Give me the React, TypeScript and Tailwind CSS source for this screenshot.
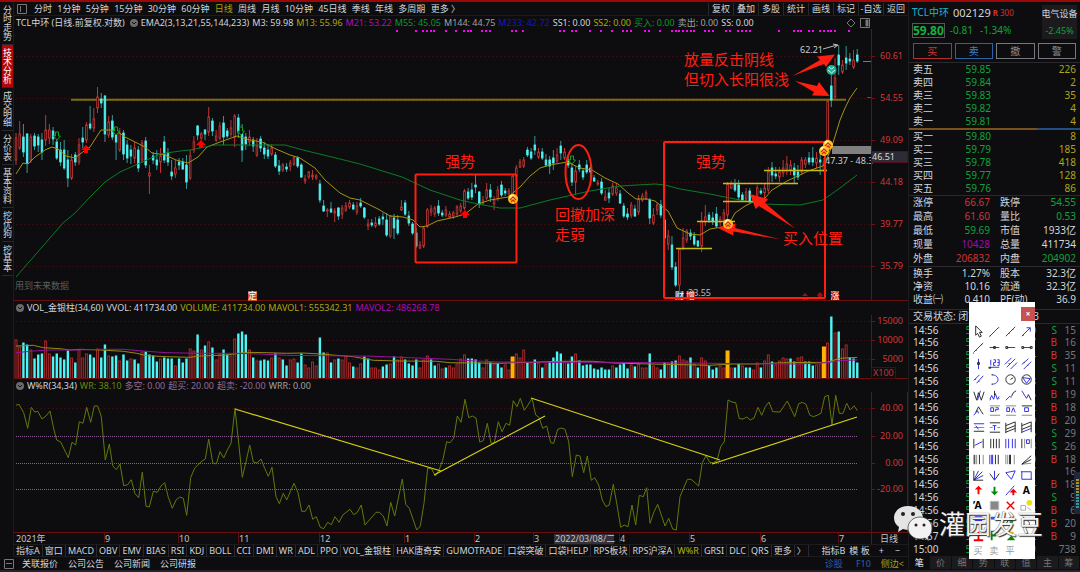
import type { ReactNode } from 'react';
import clsx from 'clsx';

const PITCH = 3.706;
const CYAN = '#4ff5f5';
const RED = '#d23a3a';
const MARK = '#ff1e10';

// colour, high, body top, body bottom, low
const CANDLES = `r133,138,160,165 r121,134,148,150 c124,137,152,157 c133,134,163,173 r134,137,160,163 c133,136,146,150 c134,137,145,152 c133,140,152,160
r115,130,140,146 r124,130,138,144 c127,131,139,145 c132,142,158,160 c142,150,162,166 c140,150,168,170 c150,160,178,187 r154,160,178,180
c152,155,162,166 r138,145,162,165 c127,138,142,148 r122,125,140,143 c106,124,128,130 r108,119,128,132 r87,97,108,113 c93,99,103,108
c95,96,134,142 r116,122,135,138 c115,121,137,140 c130,133,142,160 r128,133,150,152 c130,133,154,160 c140,145,158,163 c145,150,156,164
r142,148,158,163 c146,150,168,172 r140,143,160,163 c137,141,165,168 r165,173,176,194 c152,156,160,164 c150,160,165,170 r148,156,162,173
c136,142,160,163 c148,153,162,166 c160,172,176,180 r160,168,174,178 c158,162,165,170 c158,162,169,170 c155,165,182,189 r150,156,178,180
r136,142,150,153 c125,126,135,140 r132,134,138,140 c129,130,134,140 r107,117,132,136 c118,121,131,136 r130,136,140,142 r122,126,138,140
c116,123,137,145 c128,131,136,138 r120,128,134,137 r114,116,137,147 c114,118,132,138 c124,132,150,162 c133,137,144,150 r130,137,142,146
c137,140,146,152 r138,146,155,157 c136,139,148,152 c142,148,154,159 c144,150,156,159 r144,148,154,156 c152,155,166,168 c160,166,171,175
r163,165,170,172 c163,167,169,172 r160,163,166,171 r156,158,164,166 c156,158,166,168 c163,165,177,178 r175,179,181,184 r171,172,177,179
r170,175,177,180 r174,176,178,180 c180,184,200,203 c200,206,211,212 r208,210,211,217 c202,209,212,213 r208,211,213,222 c207,208,216,220
r205,208,214,219 r202,206,210,212 r200,203,207,209 c202,205,209,210 r202,206,212,215 c198,203,206,208 c207,208,217,219 r219,224,226,230
c219,223,225,227 r217,223,226,228 c216,219,224,226 c213,217,219,225 c213,220,235,237 r215,216,236,238 c214,218,228,239 c215,220,233,235
r200,207,210,211 c200,203,214,216 c211,216,223,226 c222,224,233,235 c228,233,246,248 r241,245,248,249 r226,228,246,248 r208,210,226,228
r205,209,212,216 r206,208,214,217 c200,206,213,216 c210,213,215,217 r206,210,215,217 r211,214,217,218 r211,213,216,219 r205,207,214,217
r203,206,211,213 r189,191,208,210 c188,192,198,200 c183,190,197,200 c175,185,187,193 c191,192,204,208 r196,200,203,205 r183,190,198,200
c184,190,197,202 r196,200,204,210 r186,190,199,201 c181,185,195,197 c188,191,193,196 r188,191,194,196 r174,176,196,198 r165,168,176,178
r159,162,167,168 r157,160,166,168 c147,150,155,157 c148,152,158,160 c136,145,150,155 r148,152,157,159 c148,152,158,160 c154,160,165,167
c156,160,166,174 c150,158,163,170 r148,155,161,163 c141,146,153,160 r148,152,158,160 c155,160,165,168 c164,168,182,186 r166,171,182,195
c160,165,169,172 c168,171,177,180 c160,165,172,174 c163,168,172,180 c175,178,181,182 r180,183,184,186 c178,182,193,195 r190,197,200,201
c188,193,198,203 r183,186,194,196 r184,188,193,196 c190,194,203,204 c203,206,216,218 c208,214,217,220 r202,205,215,218 c205,209,216,217
r195,199,212,215 r193,196,200,202 r190,193,199,200 c198,200,218,224 r208,215,223,225 r203,205,210,215 c200,205,215,218 c215,220,238,242
r230,236,244,250 c236,245,267,270 c262,267,285,287 r248,249,285,292 r228,238,247,250 r229,231,240,243 c229,233,236,240 c232,236,244,246
c240,241,246,247 r212,221,246,252 r205,217,222,226 c212,215,220,223 c212,218,222,225 c207,214,226,228 r216,219,222,226 r209,213,220,225
r182,184,215,220 r181,184,188,189 c179,184,190,192 c180,185,197,200 c192,195,200,202 r188,192,199,201 c188,191,202,203 r195,197,200,202
r185,188,195,198 c188,191,193,195 r183,188,193,198 r167,172,190,193 c162,168,175,182 c167,174,176,179 r167,172,177,182 r160,168,173,177
r156,164,169,175 r160,165,170,175 c163,168,175,183 c165,172,177,180 r157,160,172,175 r157,160,164,168 c152,158,162,165 c147,158,162,166
r152,158,163,168 c151,160,162,175 r158,162,170,172 r100,101,140,145 c65,86,100,107 r58,78,97,100 c45,55,65,75 r60,65,72,74
c46,58,63,70 c53,59,61,65 r50,60,67,69 c49,55,61,63`;

const VOLUMES = `r39 r32 c36 c34 r29 c20 c24 c25 r38 r25 c22 c25 c21 c19 c28 r21 c16 r29 r21 r25 c24 c21 r30 c21 c34 r23 c22 c23 r18 c24 c18 r20 c19 c15 r27 c27 c24 c23 c17 r20
c21 c20 c20 r13 c20 c16 c20 r30 r28 c44 r29 c33 r37 c31 r19 r25 c29 c24 r23 r40 c45 c47 c44 r29 c21 r18 c18 c19 c18 r21 c25 r21 c19 c13 r19 r20 c16 c25 r14 r11 r17 r13 c41 c26 r26
c16 r19 c20 r19 r23 r16 c12 r11 r15 c22 c20 r11 r11 r9 c12 c14 r15 c22 r19 r22 c19 c15 c13 c19 r11 r19 r23 c19 c13 r15 r10 c11 r13 r11 r15 r20 r24 c20 c20 c19 c16 r11 r19 c16 r15
c15 c11 r14 r9 y22 r25 r21 r29 c16 r16 c19 r16 c11 r15 c17 c21 c27 c25 r17 c15 c22 r25 c18 c13 c14 c14 c10 c9 c11 c9 c9 r13 c11 c14 c16 c10 r14 c12 r15 r11 r11 c25 r13 r11 c9 c16
r16 c17 c18 r23 r19 r18 c21 r15 c11 r21 r18 c13 c9 c11 r13 r11 y28 r11 c11 c15 r13 c11 c11 r9 r16 c11 r18 r24 c17 r14 r18 r21 r20 c20 c17 r21 r22 c17 c17 c13 r14 r15 y32 r36 c62 r46
c47 r30 r34 c21 c20 c16`;

// thirds of a pixel, relative to (0, 390)
const WR = `48,46 57,43 71,68 83,115 94,52 104,66 113,64 126,87 138,78 150,63 162,120 170,150 182,156 205,203 216,157 227,165 238,95 249,100 260,52 272,97 283,48 293,48 304,80 316,210
328,162 338,227 349,239 360,222 371,287 383,284 394,269 405,311 416,323 427,246 438,349 448,351 460,304 472,307 483,288 494,278 505,322 517,355 528,330 539,321 550,325 560,376 572,263
584,234 606,213 616,207 626,147 638,218 649,222 660,185 671,204 682,180 693,160 705,55 716,160 727,262 738,215 749,165 760,216 772,219 783,207 794,235 805,259 816,232 828,320 838,341
850,310 860,330 871,305 882,280 894,308 905,364 916,364 927,345 938,388 949,380 961,412 971,416 983,397 994,404 1005,380 1017,397 1028,375 1050,358 1061,374 1072,367 1084,345 1095,405
1128,367 1138,367 1150,378 1161,408 1172,337 1184,378 1207,267 1217,343 1228,355 1250,420 1261,408 1272,340 1283,234 1295,237 1306,258 1317,240 1328,211 1340,155 1350,158 1361,145
1372,78 1383,97 1395,28 1406,83 1417,78 1428,84 1439,156 1450,152 1462,100 1473,160 1483,158 1495,95 1506,125 1518,100 1529,106 1540,32 1551,50 1561,25 1573,61 1584,45 1596,25
1607,75 1617,82 1628,115 1640,108 1652,158 1661,160 1673,118 1684,114 1695,118 1706,155 1717,260 1729,195 1740,198 1751,248 1762,198 1774,271 1784,263 1796,285 1807,330 1818,350
1828,345 1840,283 1851,345 1862,412 1873,405 1884,410 1896,345 1907,405 1918,316 1930,320 1940,293 1950,400 1962,365 1973,343 1995,408 2006,385 2018,417 2029,420 2040,320 2062,268
2073,268 2096,288 2107,218 2118,197 2129,217 2140,218 2151,212 2162,170 2173,155 2184,30 2196,36 2207,38 2218,86 2229,87 2240,81 2251,90 2262,84 2274,52 2285,76 2296,50 2307,36
2318,65 2340,66 2362,33 2384,80 2396,41 2407,37 2418,43 2429,75 2440,80 2451,76 2463,70 2474,20 2485,16 2496,105 2507,16 2518,70 2529,70 2540,40 2551,60 2562,47 2572,62`;

// thirds of a pixel, relative to (0, 290)
const MAVOL1 = `48,168 100,166 130,173 180,176 210,180 240,178 300,180 370,184 410,190 440,197 500,200 570,202 600,198 680,195 740,187 800,188 860,190 910,189 960,192 1060,200 1120,211
1200,213 1310,214 1350,218 1500,220 1550,218 1690,214 1780,214 1840,219 1950,222 2050,224 2130,226 2200,222 2270,222 2350,218 2480,217 2520,205 2572,202`;
const MAVOL2 = `48,188 100,183 150,180 230,180 300,178 370,178 440,184 500,188 600,190 700,190 780,192 860,196 960,197 1050,198 1100,198 1200,202 1350,208 1410,212 1500,216 1650,217
1830,217 2050,219 2250,221 2400,222 2480,218 2520,212 2572,210`;

const EMA13 =
  '16,174 23,163 28,164 35,157 45,150 52,147 58,149 66,156 75,158 84,151 90,147 101,130 113,130 118,132 125,137 135,142 145,147 152,153 165,155 176,160 188,163 198,157 207,147 220,142 237,136 250,140 262,142 276,149 290,155 300,158 315,168 325,180 340,193 350,198 360,200 378,209 390,216 403,217 413,220 420,227 427,226 437,221 455,217 465,214 478,204 490,200 508,197 520,187 530,176 540,168 550,165 567,162 580,168 592,170 605,178 618,184 628,193 636,199 647,199 655,201 660,205 668,211 677,228 690,234 700,235 710,229 728,226 735,213 745,206 755,201 765,198 772,190 787,181 800,175 808,171 823,166 828,156 833,143 840,120 845,108 850,98 857,88';
const EMA55 =
  '16,277 63,223 75,213 90,197 105,182 120,172 140,163 160,154 180,151 190,150 215,145 285,145 303,150 340,159 360,164 402,177 430,190 460,200 478,204 500,208 520,208 550,200 590,191 620,186 655,184 665,185 680,189 710,194 740,200 760,204 800,205 823,200 840,188 857,175';

const SIGNALS = [
  397, 416, 423, 427, 431, 434, 446, 456, 464, 468, 471, 482, 486, 490, 512, 516, 523, 560, 564, 572, 576, 590, 601, 612, 623, 627, 631, 645, 649, 660, 672, 676,
  679, 683, 687, 691, 694, 705, 709, 713, 726, 730, 738, 742, 746, 750, 779, 794, 798, 801, 809, 813, 820, 824, 828, 831, 835, 849,
];

function thirds(series: string, top: number) {
  return series
    .split(/\s+/)
    .map((p) => {
      const [x, y] = p.split(',').map(Number);
      return `${(x / 3).toFixed(1)},${(top + y / 3).toFixed(1)}`;
    })
    .join(' ');
}

const GridLine = ({ y }: { y: number }) => (
  <path d={`M16 ${y}.5H871`} stroke="#3c0a0c" strokeDasharray="2 2" />
);

const AxisLabel = ({ y, children }: { y: number; children: ReactNode }) => (
  <>
    <path d={`M871 ${y}.5h4`} stroke="#7a1010" />
    <text x="903" y={y + 3} textAnchor="end" fontSize="9" fill="#d23636">
      {children}
    </text>
  </>
);

const Coin = ({ x, y }: { x: number; y: number }) => (
  <g>
    <circle cx={x} cy={y} r="5" fill="#ffc21a" />
    <circle cx={x - 1} cy={y - 2} r="2.5" fill="#fff09a" />
    <path d={`M${x - 3} ${y + 1}l3-3 3 3M${x - 2} ${y + 3}l2-2 2 2`} stroke="#d42a10" strokeWidth="1.3" fill="none" />
  </g>
);

const chartClass = 'block w-full h-auto';

function PriceChart() {
  return (
    <svg viewBox="14 29 894 272" className={chartClass} role="img" aria-label="日线">
      {[56, 98, 140, 182, 224, 266].map((y) => (
        <GridLine key={y} y={y} />
      ))}
      {SIGNALS.map((x) => (
        <rect key={x} x={x - 1} y="30" width="2" height="2" fill="#f0f" />
      ))}
      <path d="M71 99.8H846" stroke="#77700f" strokeWidth="2" />

      {CANDLES.split(/\s+/).map((c, i) => {
        const x = 16 + i * PITCH;
        const [high, top, bottom, low] = c.slice(1).split(',').map(Number);
        const up = c[0] === 'r';
        return (
          <g key={i} stroke={up ? RED : CYAN}>
            <path d={`M${x} ${high}V${top}M${x} ${bottom}V${low}`} strokeOpacity={up ? 0.9 : 0.6} />
            <rect x={x - 0.8} y={top} width="1.6" height={bottom - top} strokeWidth="0.8" fill={up ? '#0d0d0f' : CYAN} />
          </g>
        );
      })}

      <polyline points={EMA13} fill="none" stroke="#a39412" />
      <polyline points={EMA55} fill="none" stroke="#0c7a26" />
      <path d="M676 248.5H712M697 221.5H735M723 201.5H753M723 183.5H798M764 170.5H827" stroke="#c9bd10" strokeWidth="1.4" />

      {[[86, 149], [201, 144], [465, 214]].map(([x, y]) => (
        <path key={x} d={`M${x} ${y - 4}l5 5h-3v3h-4v-3h-3z`} fill="#f00" />
      ))}
      {[[57, 136], [116, 131], [241, 131], [572, 160]].map(([x, y]) => (
        <path key={x} d={`M${x} ${y + 4}l-3.500-4h2v-4h3v4h2z`} fill="#0d0d0f" stroke="#0aa51c" />
      ))}

      <rect x="832" y="146" width="39" height="8" fill="#808080" />
      <text x="825" y="164" fontSize="9" fill="#ccc">47.37 - 48.3</text>
      <path d="M871.500 29V301M14 300.500H908" stroke="#6a0e0e" />
      <AxisLabel y={56}>60.61</AxisLabel>
      <AxisLabel y={98}>54.55</AxisLabel>
      <AxisLabel y={140}>49.09</AxisLabel>
      <AxisLabel y={182}>44.18</AxisLabel>
      <AxisLabel y={224}>39.77</AxisLabel>
      <AxisLabel y={266}>35.79</AxisLabel>
      <path d="M863 61.500h8" stroke="#8a8410" />
      <path d="M867 97.500h4" stroke="#0c7a26" />
      <rect x="871.500" y="151.500" width="36" height="11" fill="#2c2b36" stroke="#541018" />
      <text x="872" y="160" fontSize="9" fill="#ddd">46.51</text>

      <text x="800" y="53" fontSize="9" fill="#ccc">62.21</text>
      <path d="M823 49l14-4m-4-1l5 1-4 3" fill="none" stroke="#bbb" />
      <text x="688" y="296" fontSize="9" fill="#bbb">33.55</text>
      <text x="15" y="289" fontSize="9" fill="#5c5c5c">用到未来数据</text>

      {/* event badges */}
      <g fontSize="9" fill="#fff" textAnchor="middle">
        <rect x="248" y="291" width="9" height="10" fill="#c8501a" />
        <text x="252.500" y="299">定</text>
        <rect x="675" y="291" width="9" height="9" fill="#17457c" />
        <text x="679.500" y="299">财</text>
        <rect x="686" y="291" width="9" height="9" fill="#8e1414" />
        <text x="690.500" y="299">增</text>
        <rect x="831" y="291" width="8" height="9" fill="#b01010" />
        <text x="835" y="299">涨</text>
      </g>
      <path d="M805 293l3 3h-6zM820 292l3 3-3 4-3-4z" fill="#a01010" />
      <path d="M803 297h5v3h-5z" fill="#17457c" />

      <g fill="none" stroke={MARK} strokeWidth="2">
        <rect x="415.500" y="174.500" width="101" height="88" rx="1" />
        <rect x="664" y="142" width="161" height="156" rx="1" />
        <ellipse cx="578.500" cy="172" rx="13" ry="27" />
      </g>
      <g fill={MARK}>
        <path d="M792.500 76L820 60l-3-3.500 18-2-9 12.500-2-3z" />
        <path d="M795 81L817 86l2-4 10.500 14-17.500-.5 2-3.500z" />
        <path d="M795 228.500L765 203l3-4-18-5 5.500 15 3.500-3z" />
        <path d="M781 239.500L735 228l.5-4.500-18.500 4 16 8 .5-4z" />
      </g>
      <g fill={MARK} fontSize="15">
        <text x="445" y="167">强势</text>
        <text x="696" y="167">强势</text>
        <text x="684" y="65">放量反击阴线</text>
        <text x="684" y="85">但切入长阳很浅</text>
        <text x="555" y="220">回撤加深</text>
        <text x="555" y="240">走弱</text>
        <text x="783" y="244">买入位置</text>
      </g>

      <Coin x={513} y={199} />
      <Coin x={728} y={224} />
      <Coin x={828} y={145} />
      <Coin x={824} y={151} />
      <circle cx="831.500" cy="70" r="5" fill="#12b394" />
      <path d="M829 67l2.500 2 2.500-2M828 70l3.500 3 3.500-3" fill="none" stroke="#d5fff6" />
    </svg>
  );
}

function VolumeChart() {
  return (
    <svg viewBox="14 315 894 64" className={chartClass} role="img" aria-label="VOL">
      <GridLine y={321} />
      <GridLine y={340} />
      <GridLine y={359} />
      {VOLUMES.split(/\s+/).map((v, i) => {
        const x = 16 + i * PITCH;
        const h = Number(v.slice(1));
        if (v[0] === 'c') return <rect key={i} x={x - 1.2} y={378.5 - h} width="2.400" height={h} fill={CYAN} />;
        if (v[0] === 'y') return <rect key={i} x={x - 2} y={378.5 - h} width="4" height={h} fill="#ffb400" />;
        return <rect key={i} x={x - 1} y={379 - h} width="2" height={h} fill="#2a0a0c" stroke="#b02c2c" strokeWidth="0.9" />;
      })}
      <polyline points={thirds(MAVOL1, 290)} fill="none" stroke="#958a10" />
      <polyline points={thirds(MAVOL2, 290)} fill="none" stroke="#98119c" />
      <path d="M871.500 315V379M14 378.500H908" stroke="#6a0e0e" />
      <AxisLabel y={321}>15000</AxisLabel>
      <AxisLabel y={340}>10000</AxisLabel>
      <AxisLabel y={359}>5000</AxisLabel>
      <rect x="871.500" y="367.500" width="24" height="11" fill="none" stroke="#4a0c0c" />
      <text x="873" y="376" fontSize="9" fill="#c83232">X100</text>
    </svg>
  );
}

const MONTHS: [number, string][] = [
  [105, '9'], [179, '10'], [239, '11'], [320, '12'], [405, '1'], [475, '2'], [534, '3'], [620, '4'], [690, '5'], [761, '6'], [839, '7'],
];

function WrChart() {
  return (
    <svg viewBox="14 392 894 152" className={chartClass} role="img" aria-label="W%R">
      <GridLine y={408} />
      {[436, 463, 489].map((y) => (
        <path key={y} d={`M16 ${y}.5H858`} stroke="#8a5c92" strokeDasharray="1 1" />
      ))}
      <polyline points={thirds(WR, 390)} fill="none" stroke="#5f7a0c" />
      <path d="M235 409L441 471M434 475L545 416M531 398L720 460M712 464L857 417" stroke="#d6cf10" strokeWidth="1.2" />
      <path d="M871.500 392V544M14 532.500H908M907.500 392V532" stroke="#6a0e0e" />
      <AxisLabel y={408}>40.00</AxisLabel>
      <AxisLabel y={436}>20.00</AxisLabel>
      <AxisLabel y={463}>0.00</AxisLabel>
      <AxisLabel y={489}>-20.00</AxisLabel>
      <rect x="554" y="534" width="60" height="10" fill="#33323c" />
      <g fontSize="9" fill="#c4c4c4">
        <text x="16" y="542">2021年</text>
        {MONTHS.map(([x, m]) => (
          <text key={m} x={x} y="542">{m}</text>
        ))}
        <text x="555" y="542">2022/03/08/二</text>
        <text x="880" y="542">日线</text>
      </g>
      <path d={MONTHS.map(([x]) => `M${x - 1}.5 533v10`).join('')} stroke="#5a1010" />
    </svg>
  );
}

type Reading = [string, string];

function IndicatorBar({ title, readings, lead }: { title: string; readings: Reading[]; lead?: string }) {
  return (
    <div className="flex h-[13px] items-center gap-[3px] pl-[2px] whitespace-nowrap">
      {lead && <span className="mr-[2px]">{lead}</span>}
      <svg viewBox="0 0 8 8" className="size-2 shrink-0">
        <circle cx="4" cy="4" r="4" fill="#6b6b6b" />
        <path d="M2 3l2 2 2-2" fill="none" stroke="#111" />
      </svg>
      <span className="text-gray-300">{title}</span>
      {readings.map(([text, color], i) => (
        <span key={i} className={color}>{text}</span>
      ))}
    </div>
  );
}

const MAIN_READINGS: Reading[] = [
  ['M3: 59.98', 'text-gray-300'], ['M13: 55.96', 'text-[#b0a410]'], ['M21: 53.22', 'text-[#b00cb4]'], ['M55: 45.05', 'text-[#0e962e]'],
  ['M144: 44.75', 'text-[#a0a0a0]'], ['M233: 42.72', 'text-[#1414d0]'], ['SS1: 0.00', 'text-gray-300'], ['SS2: 0.00', 'text-[#b0a410]'],
  ['买入: 0.00', 'text-[#0e962e]'], ['卖出: 0.00', 'text-[#a0a0a0]'], ['SS: 0.00', 'text-gray-300'],
];
const VOL_READINGS: Reading[] = [
  ['VVOL: 411734.00', 'text-gray-300'], ['VOLUME: 411734.00', 'text-[#b0a410]'], ['MAVOL1: 555342.31', 'text-[#b0a410]'], ['MAVOL2: 486268.78', 'text-[#b00cb4]'],
];
const WR_READINGS: Reading[] = [
  ['WR: 38.10', 'text-[#68860c]'], ['多空: 0.00', 'text-[#926a9a]'], ['超买: 20.00', 'text-[#926a9a]'], ['超卖: -20.00', 'text-[#926a9a]'], ['WRR: 0.00', 'text-[#a0a0a0]'],
];

const PERIODS = ['分时', '1分钟', '5分钟', '15分钟', '30分钟', '60分钟', '日线', '周线', '月线', '10分钟', '45日线', '季线', '年线', '多周期', '更多 〉'];
const TOOLS = ['复权', '叠加', '多股', '统计', '画线', '标记', '-自选', '返回'];
const SIDE_TABS = ['分时走势', '技术分析', '成交明细', '分价表', '基本资料', '挖优狗', '挖基本'];
const INDICATORS = [
  '指标A', '窗口', 'MACD', 'OBV', 'EMV', 'BIAS', 'RSI', 'KDJ', 'BOLL', 'CCI', 'DMI', 'WR', 'ADL', 'PPO', 'VOL_金银柱', 'HAK唐奇安', 'GUMOTRADE',
  '口袋突破', '口袋HELP', 'RPS板块', 'RPS沪深A', 'W%R', 'GRSI', 'DLC', 'QRS', '更多', '〉',
];

function Toolbar() {
  return (
    <div className="flex h-[13px] items-center border-b border-[#1c1c1f] text-gray-300">
      <svg viewBox="0 0 10 10" className="ml-[3px] size-[10px] shrink-0" fill="none" stroke="#777">
        <path d="M.5 .5h9v9h-9zM3.500 2v6" />
      </svg>
      <nav className="ml-[7px] flex w-[426px] shrink-0 justify-between">
        {PERIODS.map((p) => (
          <button key={p} className={clsx('whitespace-nowrap', p === '日线' && 'text-[#a8a010]')}>{p}</button>
        ))}
      </nav>
      <div className="ml-auto flex">
        {TOOLS.map((t) => (
          <button key={t} className="w-[25px] border-l border-[#2a2a2e] text-center whitespace-nowrap">{t}</button>
        ))}
      </div>
    </div>
  );
}

function SideTabs() {
  return (
    <nav className="flex w-[14px] shrink-0 flex-col border-r border-[#1c1c1f] pl-[2px] text-gray-300">
      {SIDE_TABS.map((t) => (
        <button
          key={t}
          className={clsx('flex flex-col items-center border-b border-[#2a2a2e] py-[3px] leading-[9px]', t === '技术分析' && 'bg-[#b00808] text-white')}
        >
          {[...t].map((ch, i) => (
            <span key={i}>{ch}</span>
          ))}
        </button>
      ))}
    </nav>
  );
}

const ASKS = [['卖五', '59.85', '226'], ['卖四', '59.84', '2'], ['卖三', '59.83', '35'], ['卖二', '59.82', '4'], ['卖一', '59.81', '4']];
const BIDS = [['买一', '59.80', '8'], ['买二', '59.79', '185'], ['买三', '59.78', '418'], ['买四', '59.77', '128'], ['买五', '59.76', '86']];

const G = 'text-[#12a23c]';
const R = 'text-[#cf3434]';
const W = 'text-gray-300';
const QUOTES = [
  ['涨停', '66.67', R, '跌停', '54.55', G],
  ['最高', '61.60', R, '量比', '0.53', G],
  ['最低', '59.69', G, '市值', '1933亿', W],
  ['现量', '10428', 'text-[#a00ca4]', '总量', '411734', W],
  ['外盘', '206832', R, '内盘', '204902', G],
];
const FUNDAMENTALS = [
  ['换手', '1.27%', W, '股本', '32.3亿', W],
  ['净资', '10.16', W, '流通', '32.3亿', W],
  ['收益㈠', '0.410', W, 'PE(动)', '36.9', W],
];
const TRADES: [string, string, string][] = [
  ['14:56', 'S', '15'], ['14:56', 'B', '16'], ['14:56', 'B', '35'], ['14:56', 'S', '11'], ['14:56', 'S', '11'], ['14:56', 'B', '19'],
  ['14:56', 'B', '18'], ['14:56', 'B', '20'], ['14:56', 'S', '29'], ['14:56', 'S', '26'], ['14:56', 'B', '18'], ['14:56', '', '16'],
  ['14:56', 'B', '18'], ['14:56', 'S', '9'], ['14:56', 'B', '6'], ['14:56', 'B', '20'], ['14:57', 'B', '9'], ['15:00', '', '738'],
];

function Depth({ rows }: { rows: string[][] }) {
  return (
    <table className="w-full">
      <tbody>
        {rows.map(([label, price, lots]) => (
          <tr key={label} className="h-[13px]">
            <td className="w-[44px] pl-1">{label}</td>
            <td className={clsx('w-[38px] text-right', G)}>{price}</td>
            <td className="pr-1 text-right text-[#b0a614]">{lots}</td>
          </tr>
        ))}
      </tbody>
    </table>
  );
}

function Quotes({ rows, rowClass }: { rows: string[][]; rowClass: string }) {
  return (
    <table className="w-full table-fixed border-t border-[#2a2a2e]">
      <tbody>
        {rows.map(([a, av, ac, b, bv, bc]) => (
          <tr key={a} className={rowClass}>
            <td className="w-[38px] pl-1 whitespace-nowrap">{a}</td>
            <td className={clsx('w-[43px] text-right', ac)}>{av}</td>
            <td className="w-[42px] pl-[10px] whitespace-nowrap">{b}</td>
            <td className={clsx('pr-1 text-right', bc)}>{bv}</td>
          </tr>
        ))}
      </tbody>
    </table>
  );
}

const ORDER_BUTTONS = [
  ['买', 'border-[#b03030] text-[#cf3434]'],
  ['卖', 'border-[#2a62a8] text-[#3a80d0]'],
  ['撤', 'border-[#77777c] text-[#8c8c90]'],
  ['警', 'border-[#77777c] text-[#8c8c90]'],
];

function QuotePanel() {
  return (
    <aside className="flex w-[172px] shrink-0 flex-col border-l border-[#1c1c1f] pt-px text-[10px] leading-[13px] text-gray-300">
      <div className="flex h-[38px] justify-between px-[3px]">
        <div className="pt-[3px]">
          <div className="flex items-center gap-1 whitespace-nowrap">
            <span className="text-[#18b4c8]">TCL中环</span>
            <span className="text-[11px]">002129</span>
            <span className="-ml-[2px] text-[8px] text-[#cf3434]"><b>R</b> 300</span>
          </div>
          <div className="mt-1 flex items-center gap-[5px]">
            <span className="border border-[#55555a] text-[12px] font-bold text-[#18b040]">59.80</span>
            <span className={G}>-0.81</span>
            <span className={clsx('ml-[2px]', G)}>-1.34%</span>
          </div>
        </div>
        <div className="mt-[2px] h-[34px] w-[35px] bg-[#1b1b1e] pt-[2px] text-center text-[9px] whitespace-nowrap">
          <div className="-mx-1">电气设备</div>
          <div className={clsx('mt-1', G)}>-2.45%</div>
        </div>
      </div>
      <div className="mt-[2px] grid grid-cols-4 gap-[3px] px-1">
        {ORDER_BUTTONS.map(([label, tone]) => (
          <button key={label} className={clsx('h-4 border leading-[13px]', tone)}>{label}</button>
        ))}
      </div>
      <div className="mt-[3px] border-t border-[#2a2a2e]" />
      <Depth rows={ASKS} />
      <div className="flex h-[2px]">
        <div className="w-3/4 bg-[#7a5020]" />
        <div className="flex-1 bg-[#234e82]" />
      </div>
      <Depth rows={BIDS} />
      <Quotes rows={QUOTES} rowClass="h-[14px]" />
      <Quotes rows={FUNDAMENTALS} rowClass="h-[13px]" />
      <div className="mt-[3px] flex justify-between border-y border-[#2a2a2e] pr-[41px] pl-1">
        <span>交易状态: 闭市</span>
        <span>3</span>
      </div>
      <ul className="flex flex-1 flex-col justify-between">
        {TRADES.map(([time, side, count], i) => (
          <li key={i} className="grid grid-cols-[78px_45px_21px_1fr] pr-1 pl-1 leading-[12px]">
            <span className="flex justify-between"><span>{time}</span><span className={G}>59.85</span></span>
            <span className={clsx('text-right', time === '15:00' ? 'text-[#c010c4]' : 'text-[#b0a614]')}>{(i * 37) % 90 + 10}</span>
            <span className={clsx('text-right', side === 'S' ? G : R)}>{side}</span>
            <span className="text-right text-[#77777c]">{count}</span>
          </li>
        ))}
      </ul>
      <nav className="flex h-[15px] items-center text-[9px] text-[#77777c]">
        {[...'笔价细势联值主筹'].map((t) => (
          <button key={t} className={clsx('flex-1 border-r border-[#0d0d0f]', t === '笔' ? 'text-white' : 'bg-[#1b1b1e]')}>{t}</button>
        ))}
      </nav>
    </aside>
  );
}

// [blue, black, grey] strokes on a 16px cell
const PALETTE: [string, string?, string?][] = [
  ['', 'M5 2v10l2-2 2 4 2-1-2-4h3z'], ['M3 13L12 4', 'M2.500 13h1M12 4h1'], ['M3 13L13 3', 'M6 10h1M10 6h1'], ['M3 13L12 4M8 4h4v4', 'M4 12h1'],
  ['M3 13L13 3', 'M5 11h1M11 5h1M2 14h1'], ['M3 8h10', 'M7 7h2v2h-2zM3 8h1'], ['M4 8h9', 'M3 7h2v2h-2z'], ['M4 8h9', 'M3 7h2v2h-2zM12 7h2v2h-2z'],
  ['M8 3v11', 'M7 7h2v2h-2z'], ['M3 12h10M4 4v6M7 4h2v3h-2v3h2M11 4h2v6h-2M11 7h2', 'M2 12h2v1h-2z'], ['M2 9l7-7M4 12l9-9M8 14l7-7', 'M6 8h1'], ['M3 9l7-6M5 14l8-8', 'M5 7h1M9 10h1'],
  ['M3 9l6-6M6 12l7-8', 'M4 8h1M8 10h1'], ['M5 3c9 0 9 10 0 10', 'M5 3h1M5 13h1'], ['', 'M8 3a5 5 0 1 0 .1 0M8 8l3-2'], ['M4 6l8 1-4 5z', 'M8 3a5 5 0 1 0 .1 0'],
  ['M7 13l3-10', 'M3 4l3 9 2-8 3 8 3-9'], ['M3 12l2-4 2 4 2-6 2 6 2-3', 'M8 3v5M3 13l1-1M12 12l1-1'], ['M3 13l4-4 2 1', 'M9 9l2-4 3-2'], ['M3 3l5 8 2-4', 'M10 7l3 6'],
  ['M3 12l4-5 1 3', 'M5 9l3-6 3 5 2 3'], ['M4 4h3v4h-3zM9 4h3v2h-3v2', '', 'M3 2h11M3 12h11'], ['M4 4h3v4h-3zM9 9l2-5 2 5', '', 'M3 2h11M3 12h11'], ['M6 4h4v4h-4z', 'M3 2h11', 'M3 12h11'],
  ['M3 4h11M5 6l3 4', 'M3 12h11', 'M3 8h11'], ['M6 6h4M8 6v5', 'M3 3h11M3 13h11', 'M3 8h3M11 8h3'], ['', 'M3 3v11M13 2v11M3 6l10-4M3 10l10-4M3 13l10-4', ''], ['M3 13l10-4', 'M3 3v11M13 2v11M3 6l10-4M3 10l10-4'],
  ['M4 10l8-4', 'M3 3v10M13 3v10'], ['', 'M4 3v10M7 3v10M10 3v10M13 3v10'], ['M3 3v10M6 3v10M10 3v10M13 3v10'], ['M8 4h3v4h-3z', 'M3 3v10', 'M6 3v10M13 3v10'],
  ['', 'M4 3v10M9 3v10', 'M3 3v10M6 3v10M13 3v10'], ['M3 3v10M5 3v10M6 3v10', 'M9 3v10M12 3v10'], ['', 'M7 3v10M8 3v10', 'M3 3v10M5 3v10M12 3v10'], ['', 'M3 13l10-9M3 13l10-5', 'M3 13l10-1'],
  ['M3 13l9-9M3 13l10-5M3 13l5-10', 'M3 3v10h10'], ['M8 3v9', 'M3 6l5 7 5-7'], ['M3 5l10-2-4 9z', ''], ['M3 4h10v8h-10z', 'M2 4h1M13 12h1'],
];

function PaletteIcon({ index }: { index: number }) {
  const [blue, black, grey] = PALETTE[index];
  return (
    <svg viewBox="0 0 16 16" className="size-[15px]" fill="none">
      <path d={grey || ''} stroke="#888" />
      <path d={blue} stroke="#2a2ae8" />
      <path d={black || ''} stroke="#222" />
    </svg>
  );
}

const EXTRA_ICONS = [
  <path d="M8 3l4 4H9v5H7V7H4z" fill="#f00" />,
  <path d="M8 13l4-4H9V4H7v5H4z" fill="#080" />,
  <><path d="M3 13l9-10" stroke="#2a2ae8" /><path d="M11 6l4 4h-3v3h-2v-3H7z" fill="#e00" /></>,
  <text x="4" y="12" fontSize="11" fontWeight="700" fill="#000">A</text>,
  <text x="2" y="12" fontSize="11" fontWeight="700" fill="#000">’A</text>,
  <path d="M3.500 3.500h9v9h-9z" fill="#888" stroke="#bbb" />,
  <path d="M4 4l8 8M12 4l-8 8" stroke="#e00" strokeWidth="1.500" />,
  <><path d="M2 8h5v5H2zM9 10l4 3" stroke="#aaa" fill="none" /><circle cx="11" cy="5" r="3" fill="#e8e010" /></>,
  <path d="M4 4h8M4 8h8M4 12h8" stroke="#2a2ae8" />,
  <path d="M4 4h7v3H4z" fill="#3a50e8" />,
  <><path d="M3 12l5-8" stroke="#222" /><circle cx="9" cy="9" r="2" fill="#10a070" /></>,
  <path d="M4 4l7 6M11 10v3" stroke="#555" />,
  <path d="M3 13h10M8 13V4M5 7h6" stroke="#e00" strokeWidth="2" />,
  <path d="M5 13V4h7M5 8h5" stroke="#080" strokeWidth="2" fill="none" />,
  <><path d="M4 13h9l-4-5z" fill="#080" /><path d="M5 4h7l-3 5z" fill="#e8c010" /></>,
  null,
];

function DrawingPalette() {
  return (
    <div className="absolute top-[300px] right-[45px] w-[66px] bg-white pb-[1px] shadow">
      <div className="flex h-[21px] items-start justify-end pt-[5px]">
        <button className="flex h-[14px] w-[14px] items-center justify-center bg-[#c75050] text-[8px] font-bold text-white" aria-label="关闭">×</button>
      </div>
      <div className="grid grid-cols-4 px-[1px]">
        {PALETTE.map((_, i) => (
          <button key={i} className="flex h-[16px] items-center justify-center">
            <PaletteIcon index={i} />
          </button>
        ))}
        {EXTRA_ICONS.map((icon, i) => (
          <button key={i} className="flex h-[15px] items-center justify-center">
            <svg viewBox="0 0 16 16" className="size-[15px]">{icon}</svg>
          </button>
        ))}
        {['买', '卖', '平'].map((t) => (
          <button key={t} className="h-[15px] text-[9px] text-[#999]">{t}</button>
        ))}
      </div>
    </div>
  );
}

function Watermark() {
  return (
    <div className="pointer-events-none absolute right-[37px] bottom-[28px] flex items-center gap-[6px]">
      <svg viewBox="0 0 40 37" className="h-[37px] w-10">
        <path d="M15 1C7 1 1 6 1 13c0 4 2 7 5 9l-1 5 5-3c2 .7 4 1 6 1 8 0 14-5 14-12S23 1 15 1z" fill="#e4e4e4" />
        <circle cx="10" cy="9" r="2" fill="#222" />
        <circle cx="20" cy="9" r="2" fill="#222" />
        <path d="M27 12c-7 0-12 5-12 11s5 11 12 11c2 0 3-.3 5-1l4 3-1-4c3-2 4-5 4-9 0-6-5-11-12-11z" fill="#f2f2f2" stroke="#444" strokeWidth="0.800" />
        <circle cx="23" cy="20" r="1.500" fill="#222" />
        <circle cx="31" cy="20" r="1.500" fill="#222" />
      </svg>
      <span className="text-[26px] leading-[34px] text-[#f4f4f4] [text-shadow:0_0_1px_#222,1px_1px_1px_#333]">灌园发豆</span>
    </div>
  );
}

export default function App() {
  return (
    <div className="relative flex overflow-hidden border-t-2 border-b-2 border-t-[#9c0808] border-b-[#24242c] bg-[#0d0d0f] font-['Noto_Sans','Noto_Sans_CJK_SC',sans-serif] text-[9px] leading-[12px] text-gray-300">
      <div className="flex min-w-0 flex-1 flex-col">
        <div className="flex">
          <SideTabs />
          <main className="min-w-0 flex-1 pt-px">
            <Toolbar />
            <div className="flex items-center justify-between pr-1">
              <IndicatorBar lead="TCL中环 (日线.前复权.对数)" title="EMA2(3,13,21,55,144,233)" readings={MAIN_READINGS} />
              <svg viewBox="0 0 60 12" className="h-3 w-[60px] shrink-0" fill="none" stroke="#777">
                <path d="M3 6l4-4 4 4-4 4zM16.500 1.500h9v9h-9z" />
                <path d="M22 3h2v6h-2z" fill="#777" />
              </svg>
            </div>
            <PriceChart />
            <div className="pb-px">
              <IndicatorBar title="VOL_金银柱(34,60)" readings={VOL_READINGS} />
            </div>
            <VolumeChart />
            <IndicatorBar title="W%R(34,34)" readings={WR_READINGS} />
            <WrChart />
            <nav className="flex h-[13px] items-center border-y border-[#1c1c1f] whitespace-nowrap">
              <div className="flex w-[795px] shrink-0 justify-between pl-[2px]">
                {INDICATORS.map((t) => (
                  <button key={t} className={clsx('border-r border-[#2a2a2e] pr-[2px]', t === 'W%R' && 'text-[#b8b010]')}>{t}</button>
                ))}
              </div>
              <div className="ml-auto flex items-center gap-[4px] pr-[6px]">
                <button>指标B</button>
                <button>模 板</button>
                <button className="px-[5px]">+</button>
                <button className="px-[2px]">−</button>
              </div>
            </nav>
          </main>
        </div>
        <footer className="flex h-[13px] items-center gap-[10px] pr-1 pl-1">
          <svg viewBox="0 0 10 10" className="mr-[-2px] size-[10px]" fill="none" stroke="#777">
            <path d="M.5 .5h9v9h-9zM2 4.500h6" />
          </svg>
          {['关联报价', '公司公告', '公司新闻', '公司研报'].map((t) => (
            <button key={t}>{t}</button>
          ))}
          <div className="ml-auto flex gap-[13px]">
            <button className="text-[#2f5fae]">诊股</button>
            <button className="text-[#2f5fae]">F10</button>
            <button className="-ml-[3px] text-[#a8a010]">侧边&lt;</button>
          </div>
        </footer>
      </div>
      <QuotePanel />
      <DrawingPalette />
      <div className="absolute top-[470px] right-0 flex h-[42px] w-[6px] flex-col items-center justify-center gap-px bg-[#20263c]">
        {[0, 1, 2, 3, 4, 5, 6, 7, 8, 9].map((i) => (
          <i key={i} className={clsx('h-[2px] w-[3px]', i < 5 ? 'bg-[#a09030]' : 'bg-[#309a90]')} />
        ))}
      </div>
      <Watermark />
    </div>
  );
}
